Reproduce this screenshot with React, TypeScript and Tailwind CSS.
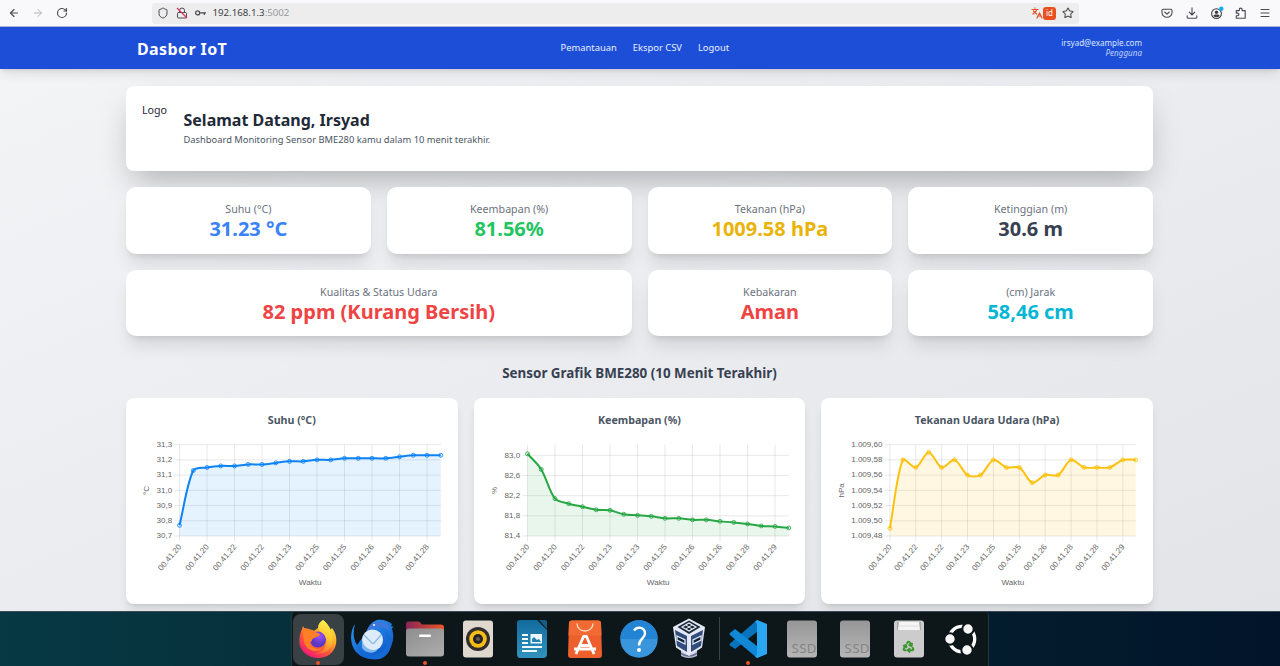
import type { ReactNode } from "react";
import { ArrowLeft, ArrowRight, RotateCw, Shield, Lock, Star, Languages, Menu, Recycle } from "lucide-react";

/* ---------- Browser toolbar ---------- */

function BrowserBar() {
  return (
    <div className="flex h-[27px] shrink-0 items-center border-b border-[#a9b4d8] bg-[#f9f9fb] text-[#4a4a50]">
      <div className="flex w-[152px] shrink-0 items-center gap-[12px] pl-[8px]">
        <ArrowLeft size={12} strokeWidth={2.3} />
        <ArrowRight size={12} strokeWidth={2} className="text-[#b4b4b9]" />
        <RotateCw size={12} strokeWidth={2.3} />
      </div>
      <div className="flex h-[21px] w-[927px] shrink-0 items-center rounded-[3px] bg-[#ededee] pl-[5px] pr-[5px]">
        <Shield size={12} strokeWidth={2} />
        <span className="relative ml-[7px] block h-3 w-3">
          <Lock size={12} strokeWidth={2} />
          <svg className="absolute inset-0" width="12" height="12" viewBox="0 0 12 12">
            <path d="M1 1 L11 11" stroke="#e0325c" strokeWidth="1.3" />
          </svg>
        </span>
        <svg className="ml-[7px]" width="12" height="12" viewBox="0 0 12 12" fill="none" stroke="currentColor" strokeWidth="1.2">
          <circle cx="2.6" cy="5.9" r="2" />
          <path d="M4.600 5.9H11M9.3 5.9V8" />
        </svg>
        <span className="ml-[5.5px] text-[9.7px] leading-none text-[#3e3e44]">
          192.168.1.3<span className="text-[#98989c]">:5002</span>
        </span>
        <div className="ml-auto flex items-center">
          <Languages size={12} strokeWidth={2.4} className="text-[#e95325]" />
          <span className="flex h-[13px] w-[13px] items-center justify-center rounded-[3px] bg-[#e9501f] text-[8px] leading-none text-white">
            id
          </span>
          <Star size={12} strokeWidth={2.1} className="ml-[6px]" />
        </div>
      </div>
      <div className="ml-auto flex items-center gap-[12px] pr-[9px]">
        <svg className="mr-px" width="12" height="12" viewBox="0 0 12 12" fill="none" stroke="currentColor" strokeWidth="1.1" strokeLinecap="round" strokeLinejoin="round">
          <path d="M2.2 2.300h7.6q1.2 0 1.2 1.2v1.900a5 4.8 0 0 1-10 0V3.500q0-1.2 1.2-1.2z" />
          <path d="M3.7 5 6 7.100l2.3-2.100" />
        </svg>
        <svg width="12" height="12" viewBox="0 0 12 12" fill="none" stroke="currentColor" strokeWidth="1.1" strokeLinecap="round" strokeLinejoin="round">
          <path d="M6 .8v7M3.2 5.2 6 8l2.8-2.8M1.2 8.8v1.4q0 1 1 1h7.6q1 0 1-1V8.8" />
        </svg>
        <svg width="13" height="13" viewBox="0 0 13 13" className="overflow-visible">
          <circle cx="6.500" cy="6.6" r="4.9" fill="none" stroke="#3e3e44" strokeWidth="1.1" />
          <circle cx="6.500" cy="5.3" r="1.7" fill="#3e3e44" />
          <path d="M3.400 9q0-1.6 1.6-1.6h3q1.6 0 1.6 1.6-1.100 1.300-3.100 1.300T3.400 9z" fill="#3e3e44" />
          <circle cx="11.300" cy="1.700" r="2.2" fill="#12b0f2" />
        </svg>
        <svg width="12" height="12" viewBox="0 0 12 12" fill="none" stroke="currentColor" strokeWidth="1.15" strokeLinejoin="round">
          <path d="M1.300 3.600h3V2.500a1.400 1.400 0 0 1 2.800 0v1.100h3.100v7.600H1.300V8.700h1.200a1.300 1.300 0 0 0 0-2.600H1.300z" />
        </svg>
        <Menu size={12} strokeWidth={2.2} />
      </div>
    </div>
  );
}

/* ---------- Dashboard ---------- */

function NavBar() {
  return (
    <nav className="z-10 h-[42px] shrink-0 bg-[#1d4ed8] text-white shadow-[0_7px_10px_-2px_rgba(0,0,0,0.09),0_2px_4px_-1px_rgba(0,0,0,0.1)]">
      <div className="ml-[126px] flex h-full w-[1027px] items-center px-[11px]">
        <div className="w-[423.500px] pt-px text-[16px] font-bold tracking-[0.4px]">Dasbor IoT</div>
        <div className="flex gap-[16px] text-[9.4px] text-[#e8eeff]">
          <span>Pemantauan</span>
          <span>Ekspor CSV</span>
          <span>Logout</span>
        </div>
        <div className="ml-auto text-right text-[8.050px] leading-[10px] text-[#dbe6fd]">
          <div>irsyad@example.com</div>
          <div className="italic text-[#bfd3fb]">Pengguna</div>
        </div>
      </div>
    </nav>
  );
}

function Stat({ label, value, className }: { label: string; value: string; className: string }) {
  return (
    <div
      className={`flex h-[66.7px] flex-col items-center rounded-[10px] bg-white pt-[14px] shadow-[0_13px_17px_-3px_rgba(0,0,0,0.1),0_5px_7px_-4px_rgba(0,0,0,0.12)] ${className}`}
    >
      <div className="text-[10.67px] leading-[16px] text-[#6b7280]">{label}</div>
      <div className="text-[20px] font-bold leading-[24px]">{value}</div>
    </div>
  );
}

type ChartProps = {
  title: string;
  unit: string;
  color: string;
  fill: string;
  left: number;
  min: number;
  max: number;
  ticks: { value: number; label: string }[];
  values: number[];
  times: string[];
};

const TOP = 6.6;
const BOTTOM = 98;
const RIGHT = 298.8;
const TENSION = 0.3;

type Pt = { x: number; y: number };

function curve(points: Pt[]) {
  const clamp = (y: number) => Math.min(BOTTOM, Math.max(TOP, y));
  const controls = points.map((p, i) => {
    const prev = points[Math.max(0, i - 1)];
    const next = points[Math.min(points.length - 1, i + 1)];
    const a = Math.hypot(p.x - prev.x, p.y - prev.y);
    const b = Math.hypot(next.x - p.x, next.y - p.y);
    const fa = (TENSION * a) / (a + b);
    const fb = (TENSION * b) / (a + b);
    return {
      inX: p.x - fa * (next.x - prev.x),
      inY: clamp(p.y - fa * (next.y - prev.y)),
      outX: p.x + fb * (next.x - prev.x),
      outY: clamp(p.y + fb * (next.y - prev.y)),
    };
  });
  return points
    .map((p, i) =>
      i === 0
        ? `M${p.x} ${p.y}`
        : `C${controls[i - 1].outX} ${controls[i - 1].outY} ${controls[i].inX} ${controls[i].inY} ${p.x} ${p.y}`,
    )
    .join(" ");
}

function Chart({ title, unit, color, fill, left, min, max, ticks, values, times }: ChartProps) {
  const step = (RIGHT - left) / (values.length - 1);
  const yOf = (v: number) => BOTTOM - ((v - min) / (max - min)) * (BOTTOM - TOP);
  const points = values.map((v, i) => ({ x: left + i * step, y: yOf(v) }));
  const line = curve(points);
  return (
    <div className="h-[206px] rounded-[8px] bg-white px-[16px] pt-[14px] shadow-[0_7px_10px_-2px_rgba(0,0,0,0.11),0_3px_4px_-3px_rgba(0,0,0,0.1)]">
      <h3 className="h-[26px] text-center text-[10.67px] font-bold leading-[16px] text-[#4b5563]">{title}</h3>
      <svg className="block overflow-visible font-['Liberation_Sans',sans-serif]" width="299.67" height="152" viewBox="0 0 299.67 152" fontSize="8.1">
        {ticks.map((t) => (
          <g key={t.label}>
            <path d={`M${left - 5.3} ${yOf(t.value)}H${RIGHT}`} stroke="#000" strokeOpacity="0.1" strokeWidth="0.9" />
            <text x={left - 7.3} y={yOf(t.value) + 2.3} textAnchor="end" fill="#666">
              {t.label}
            </text>
          </g>
        ))}
        {times.map((time, i) => {
          const x = left + i * 2 * step;
          return (
            <g key={i}>
              <path d={`M${x} ${TOP}V${BOTTOM + 5.3}`} stroke="#000" strokeOpacity="0.1" strokeWidth="0.9" />
              <text transform={`translate(${x - 0.4} ${BOTTOM + 8.8}) rotate(-50)`} y="3.5" textAnchor="end" fill="#666">
                {time}
              </text>
            </g>
          );
        })}
        <path d={`${line} L${RIGHT} ${BOTTOM} L${left} ${BOTTOM}Z`} fill={fill} />
        <path d={line} fill="none" stroke={color} strokeWidth="2" strokeLinejoin="round" />
        {points.map((p, i) => (
          <circle key={i} cx={p.x} cy={p.y} r="2" fill={fill} stroke={color} strokeWidth="0.8" />
        ))}
        <text transform="translate(6.800 52.4) rotate(-90)" textAnchor="middle" fill="#666">
          {unit}
        </text>
        <text x={(left + RIGHT) / 2} y="147" textAnchor="middle" fill="#666">
          Waktu
        </text>
      </svg>
    </div>
  );
}

const charts: ChartProps[] = [
  {
    title: "Suhu (°C)",
    unit: "°C",
    color: "#0d83f5",
    fill: "rgba(0,123,255,0.1)",
    left: 37.5,
    min: 30.7,
    max: 31.3,
    ticks: ["31,3", "31,2", "31,1", "31,0", "30,9", "30,8", "30,7"].map((label, i) => ({ label, value: 31.3 - i * 0.1 })),
    values: [30.77, 31.13, 31.15, 31.16, 31.16, 31.17, 31.17, 31.18, 31.19, 31.19, 31.2, 31.2, 31.21, 31.21, 31.21, 31.21, 31.22, 31.23, 31.23, 31.23],
    times: ["00.41.20", "00.41.20", "00.41.22", "00.41.22", "00.41.23", "00.41.25", "00.41.25", "00.41.26", "00.41.28", "00.41.28"],
  },
  {
    title: "Keembapan (%)",
    unit: "%",
    color: "#28a745",
    fill: "rgba(40,167,69,0.1)",
    left: 37.5,
    min: 81.4,
    max: 83.212,
    ticks: ["83,0", "82,6", "82,2", "81,8", "81,4"].map((label, i) => ({ label, value: 83 - i * 0.4 })),
    values: [83.03, 82.72, 82.14, 82.04, 81.98, 81.92, 81.91, 81.83, 81.81, 81.79, 81.75, 81.75, 81.72, 81.72, 81.69, 81.67, 81.64, 81.6, 81.59, 81.56],
    times: ["00.41.20", "00.41.20", "00.41.22", "00.41.23", "00.41.23", "00.41.25", "00.41.26", "00.41.26", "00.41.28", "00.41.29"],
  },
  {
    title: "Tekanan Udara Udara (hPa)",
    unit: "hPa",
    color: "#fcc20f",
    fill: "rgba(255,193,7,0.12)",
    left: 52.9,
    min: 0.48,
    max: 0.6,
    ticks: ["1.009,60", "1.009,58", "1.009,56", "1.009,54", "1.009,52", "1.009,50", "1.009,48"].map((label, i) => ({ label, value: 0.6 - i * 0.02 })),
    values: [0.49, 0.58, 0.57, 0.59, 0.57, 0.58, 0.56, 0.56, 0.58, 0.57, 0.57, 0.55, 0.56, 0.56, 0.58, 0.57, 0.57, 0.57, 0.58, 0.58],
    times: ["00.41.20", "00.41.22", "00.41.22", "00.41.23", "00.41.25", "00.41.25", "00.41.26", "00.41.28", "00.41.28", "00.41.29"],
  },
];

/* ---------- Dock icons ---------- */

function Icon({ children }: { children: ReactNode }) {
  return (
    <svg width="44" height="44" viewBox="0 0 44 44">
      {children}
    </svg>
  );
}

const Firefox = (
  <Icon>
    <defs>
      <linearGradient id="fxBody" x1="0.85" y1="0.05" x2="0.25" y2="0.95">
        <stop offset="0" stopColor="#fff14a" />
        <stop offset="0.35" stopColor="#ffb02a" />
        <stop offset="0.65" stopColor="#ff5a35" />
        <stop offset="1" stopColor="#f01b74" />
      </linearGradient>
      <linearGradient id="fxTail" x1="0.5" y1="0" x2="0.3" y2="1">
        <stop offset="0" stopColor="#fff04a" />
        <stop offset="0.5" stopColor="#ffc52e" />
        <stop offset="1" stopColor="#ff6a38" />
      </linearGradient>
      <radialGradient id="fxGlobe" cx="0.6" cy="0.3">
        <stop offset="0" stopColor="#a050f8" />
        <stop offset="1" stopColor="#5b38c4" />
      </radialGradient>
    </defs>
    <path d="M27 3c4 3 6 6 7 10l2-2c4 5 5 11 4 16-2 9-9 14-18 14S5 35 3.500 27C3 21 4 16 6 12l1-3 3 5c3-1 5-2 8 0l4-3c0-4 2-6 5-8z" fill="url(#fxBody)" />
    <circle cx="22" cy="22.500" r="8" fill="url(#fxGlobe)" />
    <path d="M7 11c4 0 7 1 10 3l7 3c-1 3-4 3-6 4-3 1-1 4-4 4 1 6 7 8 13 6-7 6-18 2-19-7-1-5-2-9-1-13z" fill="#ff7f26" />
    <path d="M27 3c-5 4-6 8-2 12 6 4 7 10 4 15-2 4-6 6-10 6 8 2 15-2 17-9 2-8-1-18-9-24z" fill="url(#fxTail)" />
  </Icon>
);

const Thunderbird = (
  <Icon>
    <defs>
      <linearGradient id="tb" x1="0" y1="0" x2="0.6" y2="1">
        <stop offset="0" stopColor="#2b9bf2" />
        <stop offset="1" stopColor="#1159c7" />
      </linearGradient>
    </defs>
    <path d="M5 7c-6 9-5 22 2 29 8 8 22 8 30 0 5-6 7-13 6-20l-1-5 2-1-3-1 1-2c-4-3-9-5-15-4-6 2-9 7-11 13L7 28C3 22 3 14 5 7z" fill="url(#tb)" />
    <path d="M16 15c4-9 11-12 16-10 5 1 8 5 8 9-5-5-14-5-24 1z" fill="#3f76dc" />
    <path d="M8 28c4 9 14 12 22 8 8-5 10-14 5-22 9 9 8 23-5 28-12 2-20-3-22-14z" fill="#1469d4" />
    <circle cx="22.500" cy="23" r="10.500" fill="#dcecfb" />
    <path d="M14 18l8 8q1 1 2 0l7-8" fill="none" stroke="#8bbbe4" strokeWidth="1.4" />
    <path d="M12 24c3 7 9 11 16 8-3 5-12 5-16-1z" fill="#7db6ec" />
    <circle cx="24" cy="8" r="1" fill="#fff" />
  </Icon>
);

const Files = (
  <Icon>
    <defs>
      <linearGradient id="ftab">
        <stop offset="0" stopColor="#8b2458" />
        <stop offset="1" stopColor="#ea5524" />
      </linearGradient>
      <linearGradient id="fbody" x2="0.7" y2="1">
        <stop offset="0" stopColor="#8d8d8d" />
        <stop offset="1" stopColor="#aaa" />
      </linearGradient>
    </defs>
    <path d="M3 16V7q0-2.500 3-2.500h9q2 0 3 2l1 1h19q3 0 3 3v6H3z" fill="url(#ftab)" />
    <rect x="3" y="11.500" width="38" height="28" rx="3" fill="url(#fbody)" />
    <rect x="16" y="17.500" width="12" height="2.500" rx="1" fill="#fff" />
  </Icon>
);

const Speaker = (
  <Icon>
    <rect x="7" y="3.500" width="30" height="37" rx="3" fill="#dfd8cf" />
    <circle cx="22" cy="22" r="12" fill="#302d2e" />
    <circle cx="22" cy="22" r="8.800" fill="#f7bd16" />
    <circle cx="22" cy="22" r="5" fill="#242327" />
    <circle cx="22" cy="22" r="2" fill="#665c50" />
  </Icon>
);

const Writer = (
  <Icon>
    <defs>
      <linearGradient id="writer" x2="0" y2="1">
        <stop stopColor="#116b9d" />
        <stop offset="1" stopColor="#3193be" />
      </linearGradient>
    </defs>
    <path d="M10 3h17l10 10v24q0 4-4 4H10q-3 0-3-4V6q0-3 3-3z" fill="url(#writer)" />
    <path d="M29 3h6q2 0 2 2v7z" fill="#135e87" />
    <path d="M12 18h6M12 22h6M12 26h6M12 30h20M12 34h15" stroke="#eef8ff" strokeWidth="1.800" />
    <rect x="20.500" y="17" width="11.500" height="9.500" fill="#eaf6fc" />
    <path d="M22 25v-3l2-2 3 3 2-1 2 3z" fill="#2281af" />
  </Icon>
);

const AppCenter = (
  <Icon>
    <path d="M9 3.500h26q3 0 3 3L39 38q0 3-3 3H8q-3 0-3-3L6 6q0-2.500 3-2.500z" fill="#ed602d" />
    <path d="M6 5q1-1.500 3-1.500h26q3 0 3 3l.5 12h-33z" fill="#f26b35" />
    <path d="M14 6.500c0 10 16 10 16 0" fill="none" stroke="#ffddc7" strokeWidth="1.300" />
    <path d="M13 37 20.500 19.500h3L31 37M11 32h22M17 28.500h10" fill="none" stroke="#fff" strokeWidth="2.800" strokeLinejoin="round" />
  </Icon>
);

const Help = (
  <Icon>
    <circle cx="22" cy="22" r="18.700" fill="#3a96dc" />
    <path d="M3.300 22a18.700 18.700 0 0 1 37.400 0z" fill="#2384d4" />
    <path d="M17 13.500c3-4.500 11-3.500 11 3 0 5-6 5-6 12" fill="none" stroke="#fff" strokeWidth="2.400" />
    <circle cx="22" cy="33" r="2" fill="#fff" />
  </Icon>
);

const VirtualBox = (
  <Icon>
    <path d="M14 33h16v6q-8 4-16 0z" fill="#bfc4dc" />
    <path d="M14 36.500q8 5 16 0" fill="none" stroke="#6c7192" strokeWidth="1.500" />
    <path d="M6 10 22 1.500l16 8.500-3 20.500-13 8.500-13-8.500z" fill="#e4e9f5" />
    <path d="M10.500 10 22 3.500l11.500 6.500L22 17z" fill="#1c2938" />
    <path d="m15 10 7-4 7 4-7 4z" fill="none" stroke="#e4e9f5" strokeWidth="1.200" />
    <path d="m19 8 6 4m0-4-6 4" stroke="#e4e9f5" strokeWidth="1" />
    <path d="m8 13 12 6v16l-10-6zM36 13l-12 6v16l10-6z" fill="#324d7b" />
    <path d="m10 19 8 4v4l-8-4zM34 19l-8 4v4l8-4z" fill="#14233c" stroke="#dce7f6" strokeWidth="1.300" />
  </Icon>
);

const VSCode = (
  <Icon>
    <path d="m31 3 9 5-31 24-5-3.500q-1-1 0-2z" fill="#0873bb" />
    <path d="m9 12-5 4q-1 1 0 2l27 23 9-5z" fill="#1088d6" />
    <path d="M31 3 41 7v30l-10 4-2-2q2 0 2-3V8q0-3-2-3z" fill="#2ba6f1" />
  </Icon>
);

const Ssd = (
  <Icon>
    <defs>
      <linearGradient id="ssd" x2="0" y2="1">
        <stop stopColor="#969696" />
        <stop offset="1" stopColor="#b6b6b6" />
      </linearGradient>
    </defs>
    <rect x="7" y="3.500" width="30" height="37" rx="3" fill="url(#ssd)" />
    <text x="11.500" y="35.500" fontSize="13.300" fill="#858585" textLength="25">
      SSD
    </text>
  </Icon>
);

const Trash = (
  <span className="relative flex h-11 w-11 items-center justify-center">
    <svg className="absolute inset-0" width="44" height="44" viewBox="0 0 44 44">
      <rect x="7" y="3.500" width="30" height="37" rx="3" fill="#ccc" />
      <path d="M10 5h24v8H10z" fill="#aaa" />
      <path d="m12 5-1 8h22l-1-8z" fill="#f5f5f5" />
      <path d="M12 9h20" stroke="#ddd" />
    </svg>
    <Recycle size={13} strokeWidth={3.6} className="relative mt-[14px] text-[#3b962f]" />
  </span>
);

const Ubuntu = (
  <Icon>
    <circle cx="23" cy="22" r="12.700" fill="none" stroke="#fff" strokeWidth="3.300" />
    <g fill="#f8f8f8" stroke="#0d1619" strokeWidth="2">
      <circle cx="11" cy="22" r="5.700" />
      <circle cx="29" cy="12" r="5.700" />
      <circle cx="28" cy="33" r="5.700" />
    </g>
  </Icon>
);

function DockItem({ children, running, active, width = "w-[53.4px]" }: { children: ReactNode; running?: boolean; active?: boolean; width?: string }) {
  return (
    <div className={`relative flex h-[54px] shrink-0 items-center justify-center ${width}`}>
      <div className={`flex h-[51px] w-[51px] shrink-0 items-center justify-center rounded-[8px] ${active ? "bg-[#394145]" : ""}`}>{children}</div>
      {running && <span className="absolute bottom-[1.5px] left-1/2 h-1 w-1 -translate-x-1/2 rounded-full bg-[#e55422]" />}
    </div>
  );
}

function Dock() {
  return (
    <div className="flex h-[55px] shrink-0 border-t border-[#3c4d57] bg-linear-to-r from-[#063944] via-[#062630] to-[#02142a]">
      <div className="ml-[290.500px] flex h-[54px] w-[698px] rounded-t-[4px] border-x border-[#28363b] bg-[#0d1619]">
        <DockItem active running>{Firefox}</DockItem>
        <DockItem>{Thunderbird}</DockItem>
        <DockItem running>{Files}</DockItem>
        <DockItem>{Speaker}</DockItem>
        <DockItem>{Writer}</DockItem>
        <DockItem>{AppCenter}</DockItem>
        <DockItem>{Help}</DockItem>
        <DockItem width="w-[47px]">{VirtualBox}</DockItem>
        <div className="ml-[7px] mt-[5px] h-[43px] w-px bg-[#3a4347]" />
        <DockItem running width="w-[55px]">{VSCode}</DockItem>
        <DockItem>{Ssd}</DockItem>
        <DockItem>{Ssd}</DockItem>
        <DockItem>{Trash}</DockItem>
        <DockItem width="w-[51px]">{Ubuntu}</DockItem>
      </div>
    </div>
  );
}

export default function App() {
  return (
    <div className="flex h-[666px] w-[1280px] flex-col overflow-hidden font-['Noto_Sans',sans-serif]">
      <BrowserBar />
      <NavBar />
      <main className="min-h-0 flex-1 overflow-hidden bg-linear-to-br from-[#f3f4f6] to-[#e3e4e8]">
        <div className="ml-[126px] w-[1027px] pt-[16.500px]">
          <section className="flex h-[85.500px] rounded-[8px] bg-white px-[16px] shadow-[0_16px_32px_-7px_rgba(0,0,0,0.27)]">
            <div className="w-[41.500px] pt-[16.500px] text-[10.67px] leading-[16px] text-[#1f2937]">Logo</div>
            <div className="pt-[24px]">
              <h1 className="text-[16px] font-bold leading-[21.300px] text-[#1f2937]">Selamat Datang, Irsyad</h1>
              <p className="mt-[2px] text-[9.36px] leading-[14px] text-[#4b5563]">Dashboard Monitoring Sensor BME280 kamu dalam 10 menit terakhir.</p>
            </div>
          </section>
          <section className="mt-[16px] grid grid-cols-4 gap-[16px]">
            <Stat label="Suhu (°C)" value="31.23 °C" className="text-[#3b82f6]" />
            <Stat label="Keembapan (%)" value="81.56%" className="text-[#22c55e]" />
            <Stat label="Tekanan (hPa)" value="1009.58 hPa" className="text-[#eab308]" />
            <Stat label="Ketinggian (m)" value="30.6 m" className="text-[#374151]" />
            <Stat label="Kualitas & Status Udara" value="82 ppm (Kurang Bersih)" className="col-span-2 text-[#ef4444]" />
            <Stat label="Kebakaran" value="Aman" className="text-[#ef4444]" />
            <Stat label="(cm) Jarak" value="58,46 cm" className="text-[#06b6d4]" />
          </section>
          <h2 className="mt-[28px] text-center text-[13.400px] font-bold leading-[18px] text-[#374151]">
            Sensor Grafik BME280 (10 Menit Terakhir)
          </h2>
          <section className="mt-[15.500px] grid grid-cols-3 gap-[16px]">
            {charts.map((c) => (
              <Chart key={c.title} {...c} />
            ))}
          </section>
        </div>
      </main>
      <Dock />
    </div>
  );
}
